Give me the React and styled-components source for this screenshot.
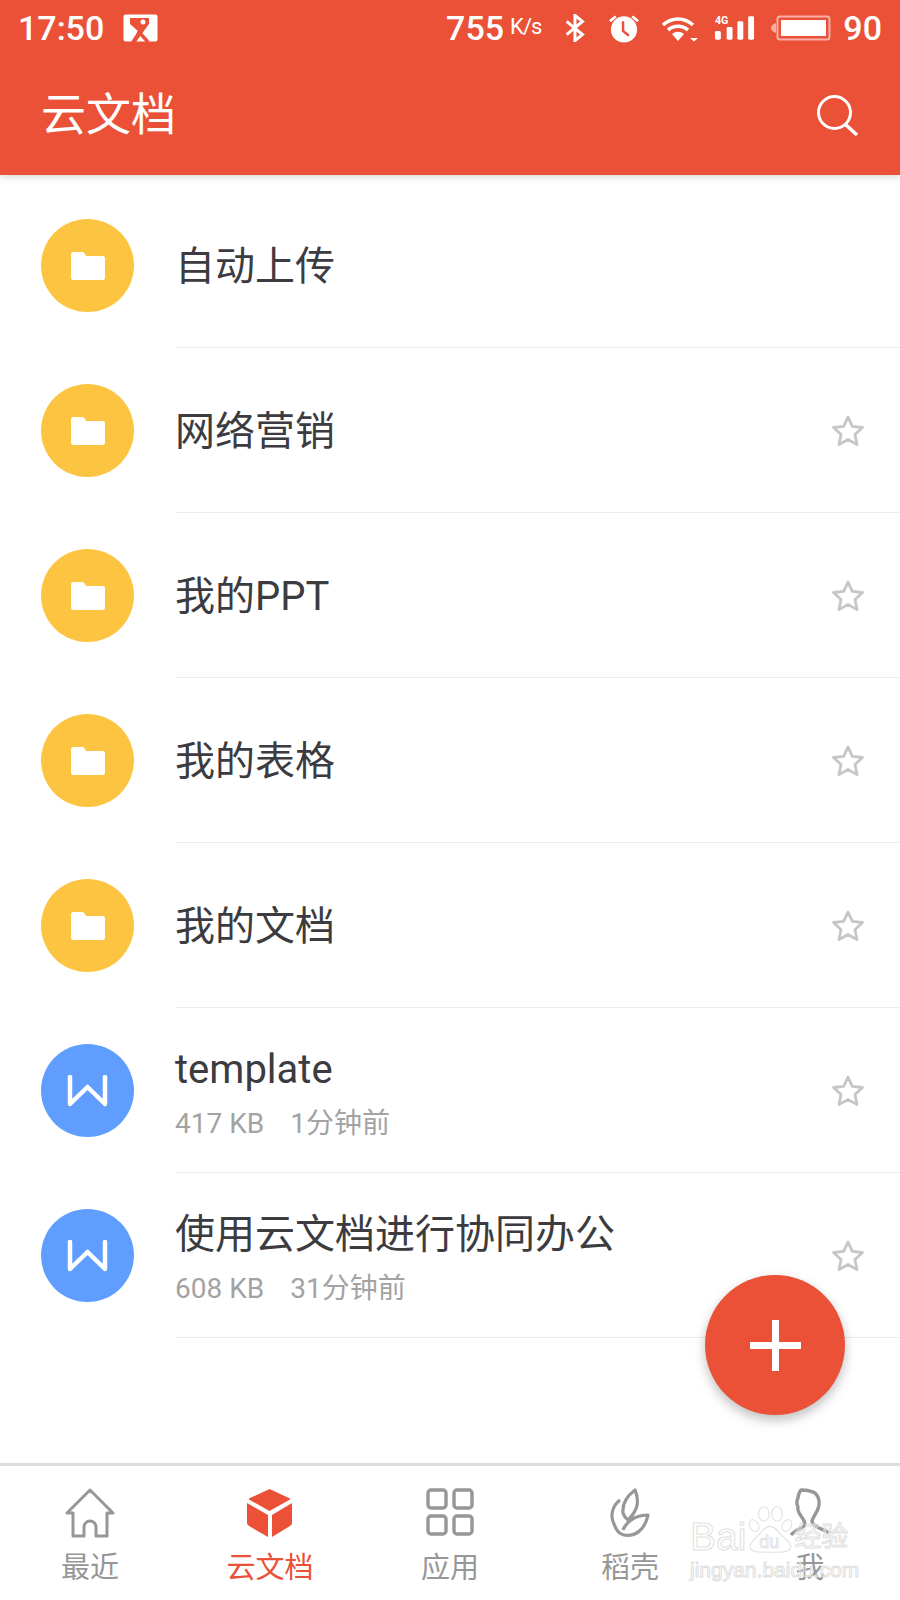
import React from 'react';
import styled, { createGlobalStyle } from 'styled-components';

const RED = '#ea5136';
const FONT = 'Roboto, "Noto Sans CJK SC", sans-serif';

const GlobalStyle = createGlobalStyle`
  html, body {
    margin: 0;
    padding: 0;
    background: #fff;
  }
  * {
    box-sizing: border-box;
  }
`;

const Page = styled.div`
  width: 900px;
  height: 1600px;
  position: relative;
  overflow: hidden;
  display: flex;
  flex-direction: column;
  background: #fff;
  font-family: ${FONT};
`;

const Header = styled.header`
  height: 175px;
  flex: none;
  background: ${RED};
  color: #fff;
  box-shadow: 0 2px 7px rgba(0, 0, 0, 0.16);
  position: relative;
  z-index: 2;
`;

const StatusBar = styled.div`
  height: 56px;
  padding: 0 18px;
  display: flex;
  align-items: center;
  justify-content: space-between;
  font-size: 34px;
  font-weight: 500;
`;

const StatusGroup = styled.div`
  display: flex;
  align-items: center;
`;

const SpeedUnit = styled.span`
  font-size: 22px;
  font-weight: 400;
  margin-left: 6px;
  margin-top: -3px;
  letter-spacing: -1px;
`;

const BatteryLevel = styled.span`
  margin-left: 12px;
`;

const Glyph = styled.svg`
  display: block;
  flex: none;
  margin-left: ${(props) => props.$left || 0}px;
`;

const Toolbar = styled.div`
  height: 119px;
  padding: 0 40px 0 41px;
  display: flex;
  align-items: center;
  justify-content: space-between;
`;

const Title = styled.h1`
  margin: 0;
  font-size: 45px;
  font-weight: 400;
  line-height: 60px;
`;

const List = styled.ul`
  flex: 1;
  list-style: none;
  margin: 0;
  padding: 8px 0 0;
`;

const Row = styled.li`
  height: 165px;
  display: flex;
  align-items: center;
  padding-left: 41px;
`;

const Badge = styled.div`
  width: 93px;
  height: 93px;
  flex: none;
  border-radius: 50%;
  background: ${(props) => props.$color};
  display: flex;
  align-items: center;
  justify-content: center;
`;

const RowBody = styled.div`
  flex: 1;
  height: 100%;
  margin-left: 41px;
  padding-right: 35px;
  border-bottom: 1px solid #ececec;
  display: flex;
  align-items: center;
  justify-content: space-between;
`;

const RowText = styled.div`
  display: flex;
  flex-direction: column;
  margin-top: ${(props) => (props.$meta ? 7 : 3)}px;
`;

const Name = styled.div`
  font-size: 40px;
  line-height: 52px;
  color: #3b3b40;
`;

const Meta = styled.div`
  font-size: 28px;
  line-height: 38px;
  margin-top: 9px;
  color: #a3a3a3;
  display: flex;
  gap: 26px;
`;

const Fab = styled.button`
  position: absolute;
  left: 705px;
  top: 1275px;
  width: 140px;
  height: 140px;
  padding: 0;
  border: none;
  border-radius: 50%;
  background: ${RED};
  box-shadow: 0 5px 12px rgba(0, 0, 0, 0.26);
  display: flex;
  align-items: center;
  justify-content: center;
`;

const TabBar = styled.nav`
  height: 137px;
  flex: none;
  border-top: 3px solid #dcdcdc;
  display: grid;
  grid-template-columns: repeat(5, 180px);
  background: #fff;
`;

const Tab = styled.div`
  display: flex;
  flex-direction: column;
  align-items: center;
  padding-top: 22px;
  color: ${(props) => (props.$active ? RED : '#979797')};
`;

const TabLabel = styled.span`
  font-size: 29px;
  line-height: 36px;
  margin-top: 12px;
`;

const Watermark = styled.div`
  position: absolute;
  left: 690px;
  top: 1503px;
  width: 166px;
  color: transparent;
  pointer-events: none;
  z-index: 3;
  font-family: "Liberation Sans", "Noto Sans CJK SC", sans-serif;
  -webkit-text-stroke: 1px #e0e0e0;
`;

const WatermarkTop = styled.div`
  display: flex;
  align-items: flex-end;
  height: 53px;
`;

const WatermarkWord = styled.span`
  font-size: ${(props) => props.$size}px;
  line-height: 38px;
  white-space: nowrap;
`;

const WatermarkSite = styled.div`
  font-size: 21px;
  line-height: 24px;
  margin-top: 2px;
  white-space: nowrap;
`;

const StatusPicture = () => (
  <Glyph $left={19} width="35" height="28" viewBox="0 0 35 28">
    <rect x="0.500" y="0.500" width="34" height="27" rx="2" fill="#fff" />
    <path d="M7 4H26V10L13 28H8L15 17 7 10Z" fill={RED} />
    <path d="M15 17 25 28" stroke={RED} strokeWidth="3.500" fill="none" />
    <circle cx="20" cy="8" r="2.500" fill="#fff" />
  </Glyph>
);

const Bluetooth = () => (
  <Glyph $left={23} width="22" height="28" viewBox="0 0 22 30">
    <path
      d="M2 8l17 14-8 6.500V1.500L19 8 2 22"
      fill="none"
      stroke="#fff"
      strokeWidth="3.200"
    />
  </Glyph>
);

const Alarm = () => (
  <Glyph $left={22} width="32" height="30" viewBox="0 0 33 30">
    <circle cx="16.500" cy="16.500" r="13.500" fill="#fff" />
    <path d="M1 7l6-5 2 2-6 5zM32 7l-6-5-2 2 6 5z" fill="#fff" />
    <path d="M15.500 8v10l6 5" fill="none" stroke={RED} strokeWidth="2.500" />
  </Glyph>
);

const Wifi = () => (
  <Glyph $left={21} width="37" height="28" viewBox="0 0 37 28">
    <path
      d="M2 11c9-8 21-8 30 0M7 16c6-5 14-5 20 0"
      fill="none"
      stroke="#fff"
      strokeWidth="3.600"
    />
    <path d="M11 20c4-3 8-3 12 0l-6 7z" fill="#fff" />
    <path d="M29 24h8l-4 3.500z" fill="#fff" />
  </Glyph>
);

const Signal = () => (
  <Glyph $left={16} width="41" height="26" viewBox="0 0 42 26">
    <text x="1" y="9" fontSize="11" fontWeight="700" fill="#fff" fontFamily="Roboto, sans-serif">
      4G
    </text>
    <rect x="1" y="16" width="6" height="9" rx="1.500" fill="#fff" />
    <rect x="13" y="12" width="6" height="13" rx="1.500" fill="#fff" />
    <rect x="24" y="6" width="6" height="19" rx="1.500" fill="#fff" />
    <rect x="35" y="1" width="6" height="24" rx="1.500" fill="#fff" />
  </Glyph>
);

const Battery = () => (
  <Glyph $left={16} width="60" height="26" viewBox="0 0 60 26">
    <path d="M5 8v10C2 17 0 15 0 13s2-4 5-5z" fill="#fff" fillOpacity="0.55" />
    <rect x="6.500" y="1.500" width="52" height="23" rx="2.500" fill="none" stroke="#fff" strokeOpacity="0.55" strokeWidth="2" />
    <rect x="10" y="5" width="45" height="16" fill="#fff" />
  </Glyph>
);

const SearchIcon = () => (
  <svg width="44" height="44" viewBox="0 0 44 44">
    <circle cx="18.500" cy="18.500" r="16" fill="none" stroke="#fff" strokeWidth="3" />
    <path d="M29.500 30.500 41 41" fill="none" stroke="#fff" strokeWidth="3.600" />
  </svg>
);

const FolderIcon = () => (
  <svg width="34" height="28" viewBox="0 0 34 28">
    <path
      fill="#fff"
      d="M2.500 0h8.500c1.500 0 2.500 1 3 2l1 2h16.500A2.500 2.500 0 0 1 34 6.500V25.500A2.500 2.500 0 0 1 31.500 28h-29A2.500 2.500 0 0 1 0 25.500v-23A2.500 2.500 0 0 1 2.500 0z"
    />
  </svg>
);

const WpsIcon = () => (
  <svg width="41" height="32" viewBox="0 0 41 32">
    <path
      d="M3 2v27L20.500 12 38 29V2"
      fill="none"
      stroke="#fff"
      strokeWidth="4.500"
      strokeLinecap="round"
      strokeLinejoin="round"
    />
  </svg>
);

const StarIcon = () => (
  <svg width="34" height="33" viewBox="0 0 34 33">
    <path
      d="M17 3l4.300 9.300 10.200 1.200-7.500 7 2 10.100L17 25.500l-9 5.100 2-10.100-7.500-7 10.200-1.200z"
      fill="none"
      stroke="#c6c6c6"
      strokeWidth="2.800"
      strokeLinejoin="round"
    />
  </svg>
);

const PlusIcon = () => (
  <svg width="51" height="51" viewBox="0 0 51 51">
    <path d="M25.500 0v51M0 25.500h51" stroke="#fff" strokeWidth="7" fill="none" />
  </svg>
);

const HomeIcon = () => (
  <svg width="50" height="50" viewBox="0 0 50 50">
    <path
      d="M8 48V25H2L25 2l23 23h-6v23H31V39a6 6 0 0 0-12 0v9z"
      fill="none"
      stroke="currentColor"
      strokeWidth="3"
      strokeLinejoin="round"
    />
  </svg>
);

const CubeIcon = () => (
  <svg width="50" height="50" viewBox="0 0 50 50">
    <path fill="currentColor" d="M24.500 1 45 10.500a1 1 0 0 1 0 1L24.500 23 4 11.500a1 1 0 0 1 0-1z" />
    <path fill="currentColor" d="M2 15l21 12v22L4 38c-1.500-1-2-2-2-3.500z" />
    <path fill="currentColor" d="M47 15 27 27v22l18-11c1.500-1 2-2 2-3.500z" />
  </svg>
);

const AppsIcon = () => (
  <svg width="50" height="50" viewBox="0 0 50 50">
    <g fill="none" stroke="currentColor" strokeWidth="3.400">
      <rect x="3" y="2" width="18" height="18" rx="3" />
      <rect x="29" y="2" width="18" height="18" rx="3" />
      <rect x="3" y="28" width="18" height="18" rx="3" />
      <rect x="29" y="28" width="18" height="18" rx="3" />
    </g>
  </svg>
);

const LeafIcon = () => (
  <svg width="50" height="50" viewBox="0 0 50 50">
    <path
      d="M30 2C22 8 17 15 18 25c1 4 3 5 5 7 7-7 13-16 7-30zM15 12C7 18 5 28 9 36c2 6 5 10 10 11 11 2 21-5 24-20-11 0-21 5-25 15"
      fill="none"
      stroke="currentColor"
      strokeWidth="3.200"
      strokeLinejoin="round"
    />
  </svg>
);

const PersonIcon = () => (
  <svg width="50" height="50" viewBox="0 0 50 50">
    <path
      d="M6 47C9 43 15 41 19 38 21 35 19 32 16 28 14 25 12 22 13 19 11 15 12 12 13 10 13 7 15 3 16 2 22 2 28 3 31 6 34 9 35 15 33 21 31 26 28 29 27 33 27 36 30 38 34 40 38 42 42 43 44 45"
      fill="none"
      stroke="currentColor"
      strokeWidth="3.400"
      strokeLinejoin="round"
    />
  </svg>
);

const PawMark = () => (
  <svg width="48" height="53" viewBox="0 0 54 53">
    <g fill="none" stroke="#e0e0e0" strokeWidth="1.200">
      <ellipse cx="9" cy="22" rx="5" ry="7" transform="rotate(-30 9 22)" />
      <ellipse cx="20" cy="9" rx="6" ry="8" />
      <ellipse cx="35" cy="9" rx="6" ry="8" />
      <ellipse cx="46" cy="22" rx="5" ry="7" transform="rotate(30 46 22)" />
      <path d="M27 23c-6 0-9 6-14 11-7 7-10 10-8 14 2 4 8 4 22 4s21 0 23-4c2-4-2-8-9-14-5-5-8-11-14-11z" />
    </g>
    <text x="15" y="47" fontSize="20" fontFamily="Liberation Sans, sans-serif" fill="none" stroke="#e0e0e0" strokeWidth="1">
      du
    </text>
  </svg>
);

const files = [
  { name: '自动上传', folder: true, noStar: true },
  { name: '网络营销', folder: true },
  { name: '我的PPT', folder: true },
  { name: '我的表格', folder: true },
  { name: '我的文档', folder: true },
  { name: 'template', size: '417 KB', time: '1分钟前' },
  { name: '使用云文档进行协同办公', size: '608 KB', time: '31分钟前' },
];

const tabs = [
  { label: '最近', icon: <HomeIcon /> },
  { label: '云文档', icon: <CubeIcon />, active: true },
  { label: '应用', icon: <AppsIcon /> },
  { label: '稻壳', icon: <LeafIcon /> },
  { label: '我', icon: <PersonIcon /> },
];

const App = () => {
  return (
    <Page>
      <GlobalStyle />
      <Header>
        <StatusBar>
          <StatusGroup>
            <span>17:50</span>
            <StatusPicture />
          </StatusGroup>
          <StatusGroup>
            <span>755</span>
            <SpeedUnit>K/s</SpeedUnit>
            <Bluetooth />
            <Alarm />
            <Wifi />
            <Signal />
            <Battery />
            <BatteryLevel>90</BatteryLevel>
          </StatusGroup>
        </StatusBar>
        <Toolbar>
          <Title>云文档</Title>
          <SearchIcon />
        </Toolbar>
      </Header>

      <List>
        {files.map((file) => (
          <Row key={file.name}>
            <Badge $color={file.folder ? '#fdc441' : '#5f9eff'}>
              {file.folder ? <FolderIcon /> : <WpsIcon />}
            </Badge>
            <RowBody>
              <RowText $meta={Boolean(file.size)}>
                <Name>{file.name}</Name>
                {file.size && (
                  <Meta>
                    <span>{file.size}</span>
                    <span>{file.time}</span>
                  </Meta>
                )}
              </RowText>
              {!file.noStar && <StarIcon />}
            </RowBody>
          </Row>
        ))}
      </List>

      <Fab aria-label="新建">
        <PlusIcon />
      </Fab>

      <TabBar>
        {tabs.map((tab) => (
          <Tab key={tab.label} $active={tab.active}>
            {tab.icon}
            <TabLabel>{tab.label}</TabLabel>
          </Tab>
        ))}
      </TabBar>

      <Watermark>
        <WatermarkTop>
          <WatermarkWord $size={39}>Bai</WatermarkWord>
          <PawMark />
          <WatermarkWord $size={27}>经验</WatermarkWord>
        </WatermarkTop>
        <WatermarkSite>jingyan.baidu.com</WatermarkSite>
      </Watermark>
    </Page>
  );
};

export default App;
